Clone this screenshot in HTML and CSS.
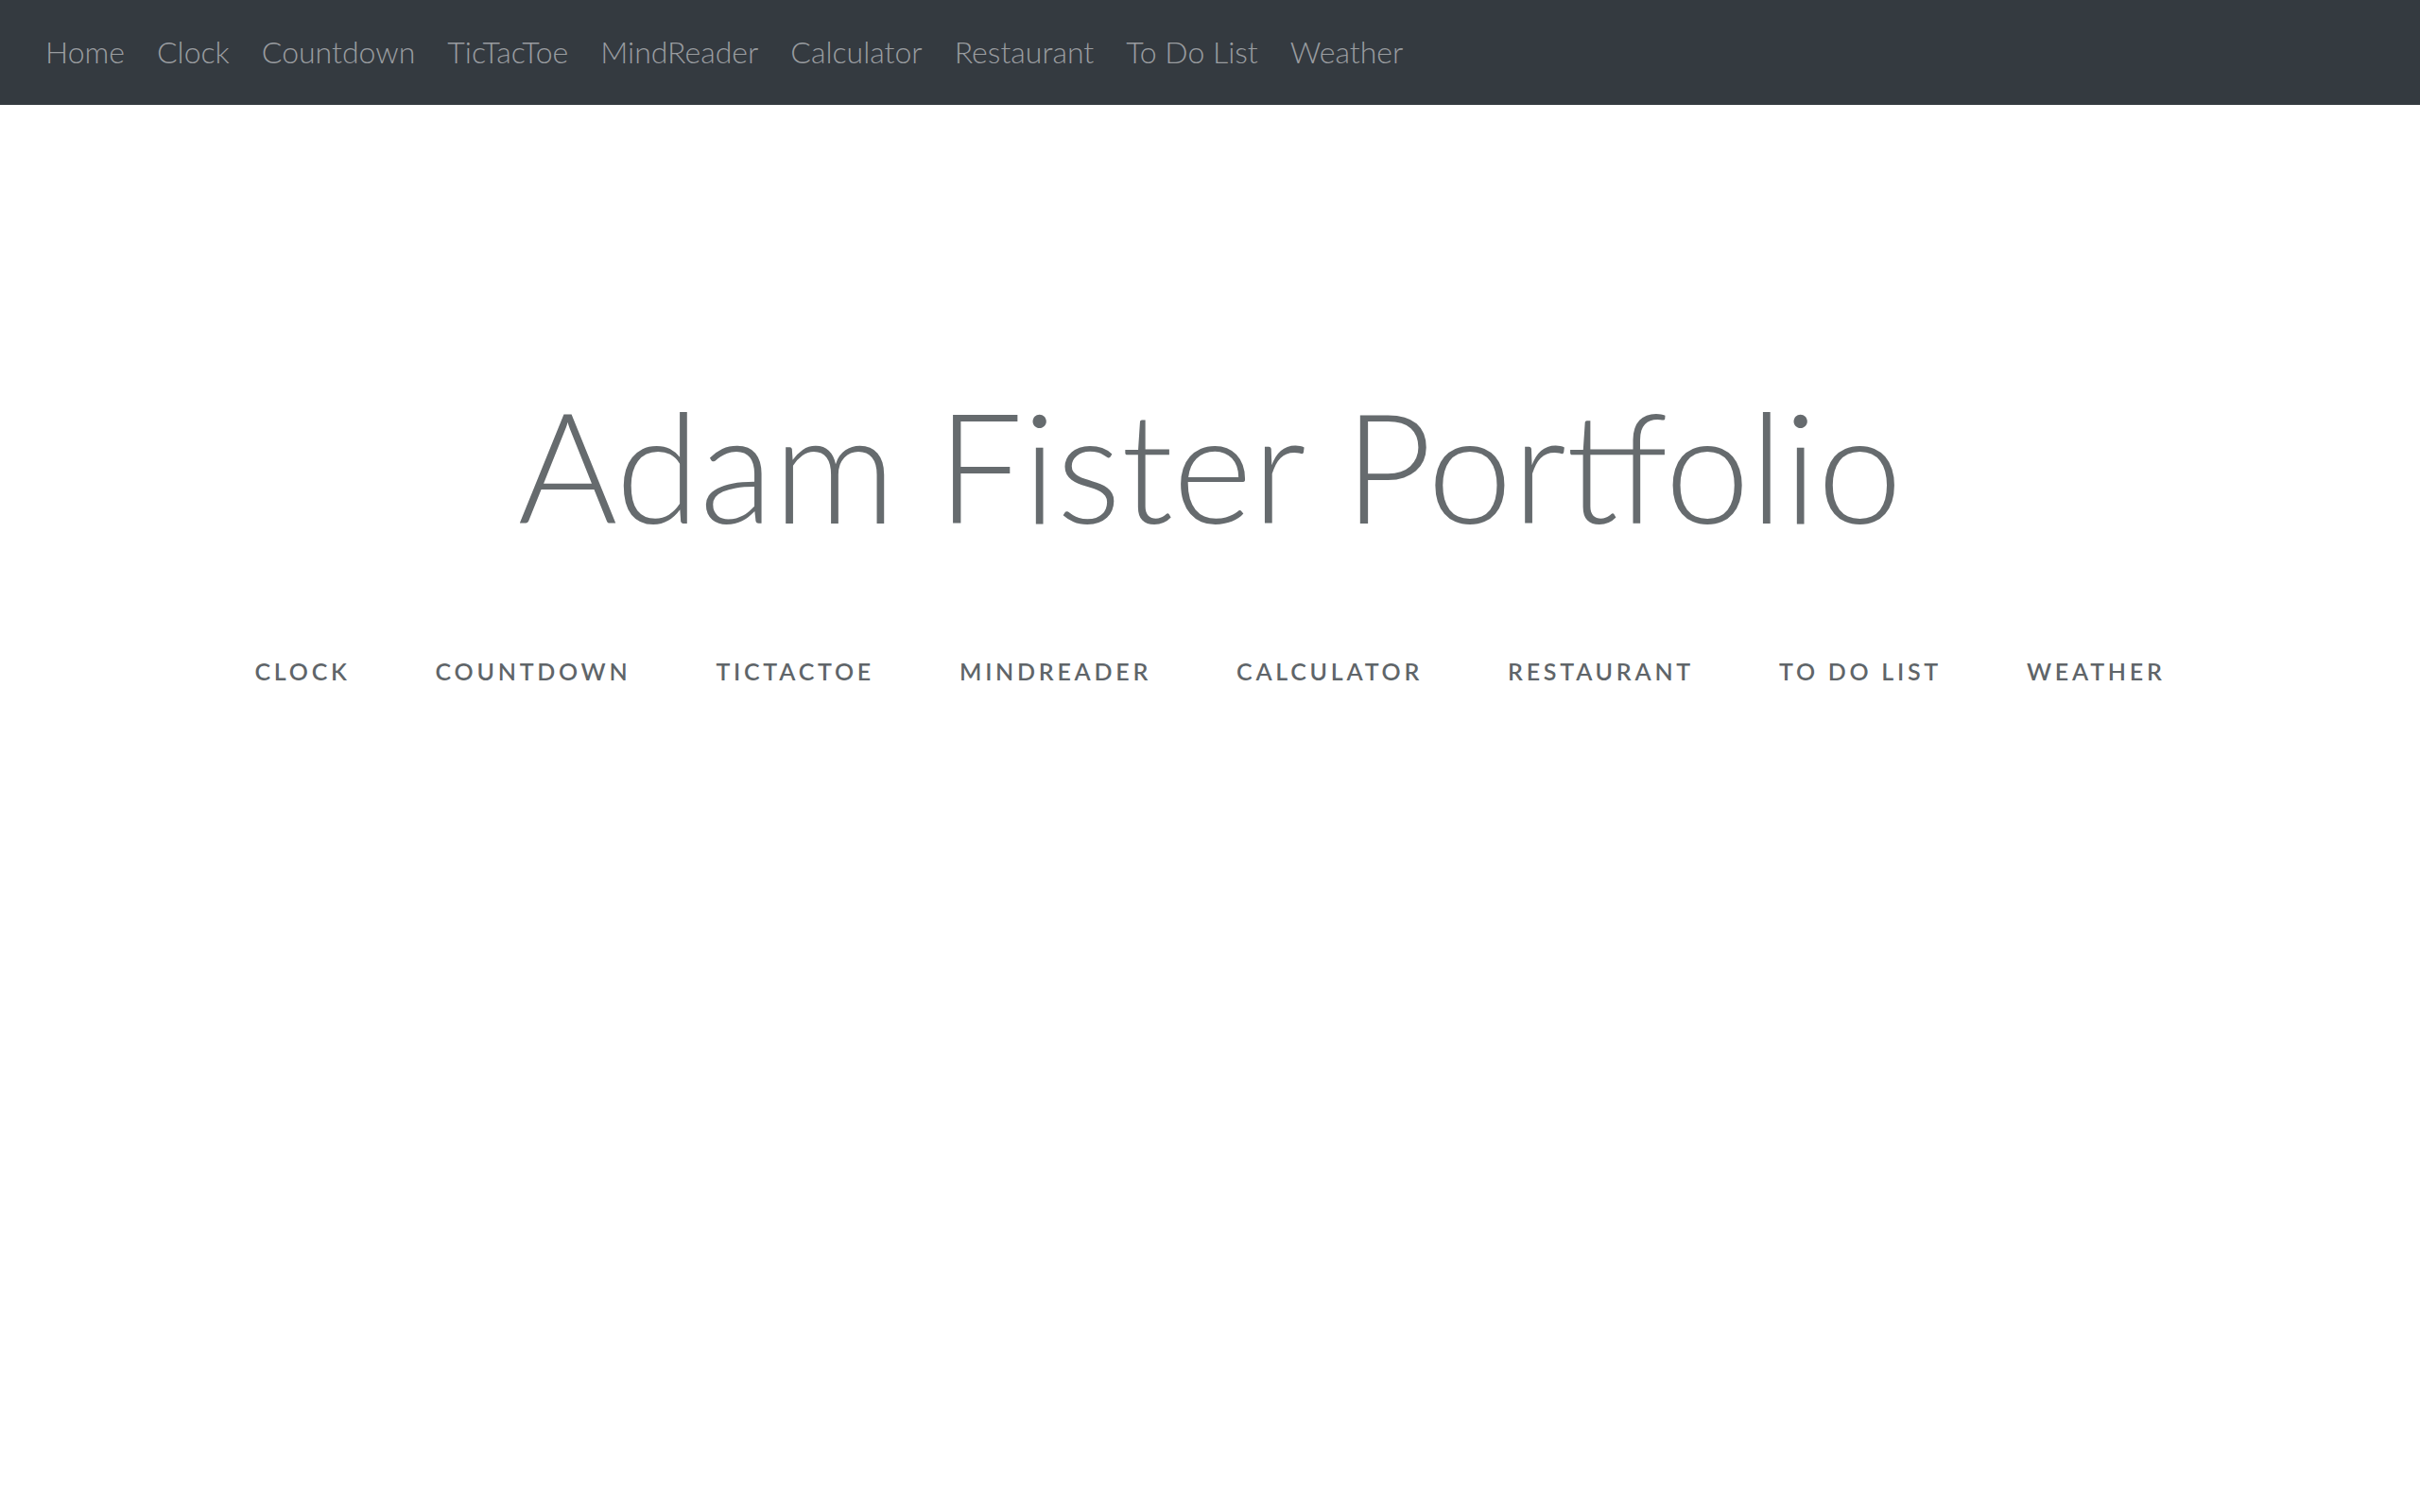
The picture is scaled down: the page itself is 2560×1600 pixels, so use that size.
FILE: index.html
```html
<!DOCTYPE html>
<html lang="en">
<head>
<meta charset="utf-8">
<title>Adam Fister Portfolio</title>
<link rel="stylesheet" href="styles.css">
</head>
<body>
<nav class="topbar">
  <a class="toplink" href="#">Home</a>
  <a class="toplink" href="#">Clock</a>
  <a class="toplink" href="#">Countdown</a>
  <a class="toplink" href="#">TicTacToe</a>
  <a class="toplink" href="#">MindReader</a>
  <a class="toplink" href="#">Calculator</a>
  <a class="toplink" href="#">Restaurant</a>
  <a class="toplink" href="#">To Do List</a>
  <a class="toplink" href="#">Weather</a>
</nav>
<main class="masthead">
  <h1 class="title">Adam Fister Portfolio</h1>
  <div class="projects">
    <a class="project" href="#">Clock</a>
    <a class="project" href="#">Countdown</a>
    <a class="project" href="#">TicTacToe</a>
    <a class="project" href="#">MindReader</a>
    <a class="project" href="#">Calculator</a>
    <a class="project" href="#">Restaurant</a>
    <a class="project" href="#">To Do List</a>
    <a class="project" href="#">Weather</a>
  </div>
</main>
</body>
</html>
```
FILE: styles.css
```css
* { box-sizing: border-box; }
html, body { margin: 0; padding: 0; background: #fff; }
body { font-family: "Lato", "Noto Sans", sans-serif; }

.topbar {
  height: 111px;
  background: #343a40;
  display: flex;
  align-items: center;
  gap: 34px;
  padding: 0 0 3px 48px;
}
.toplink {
  color: #9a9da0;
  text-decoration: none;
  font-size: 32px;
  font-weight: 300;
}

.masthead {
  display: flex;
  flex-direction: column;
  align-items: center;
  padding-top: 300px;
}
.title {
  margin: 0;
  font-weight: 300;
  font-size: 161px;
  line-height: 1;
  color: #666b6e;
}
.projects {
  display: flex;
  gap: 90px;
  margin-top: 123px;
}
.project {
  color: #5f6569;
  text-decoration: none;
  text-transform: uppercase;
  font-size: 25px;
  font-weight: 600;
  letter-spacing: 0.15em;
}
```
